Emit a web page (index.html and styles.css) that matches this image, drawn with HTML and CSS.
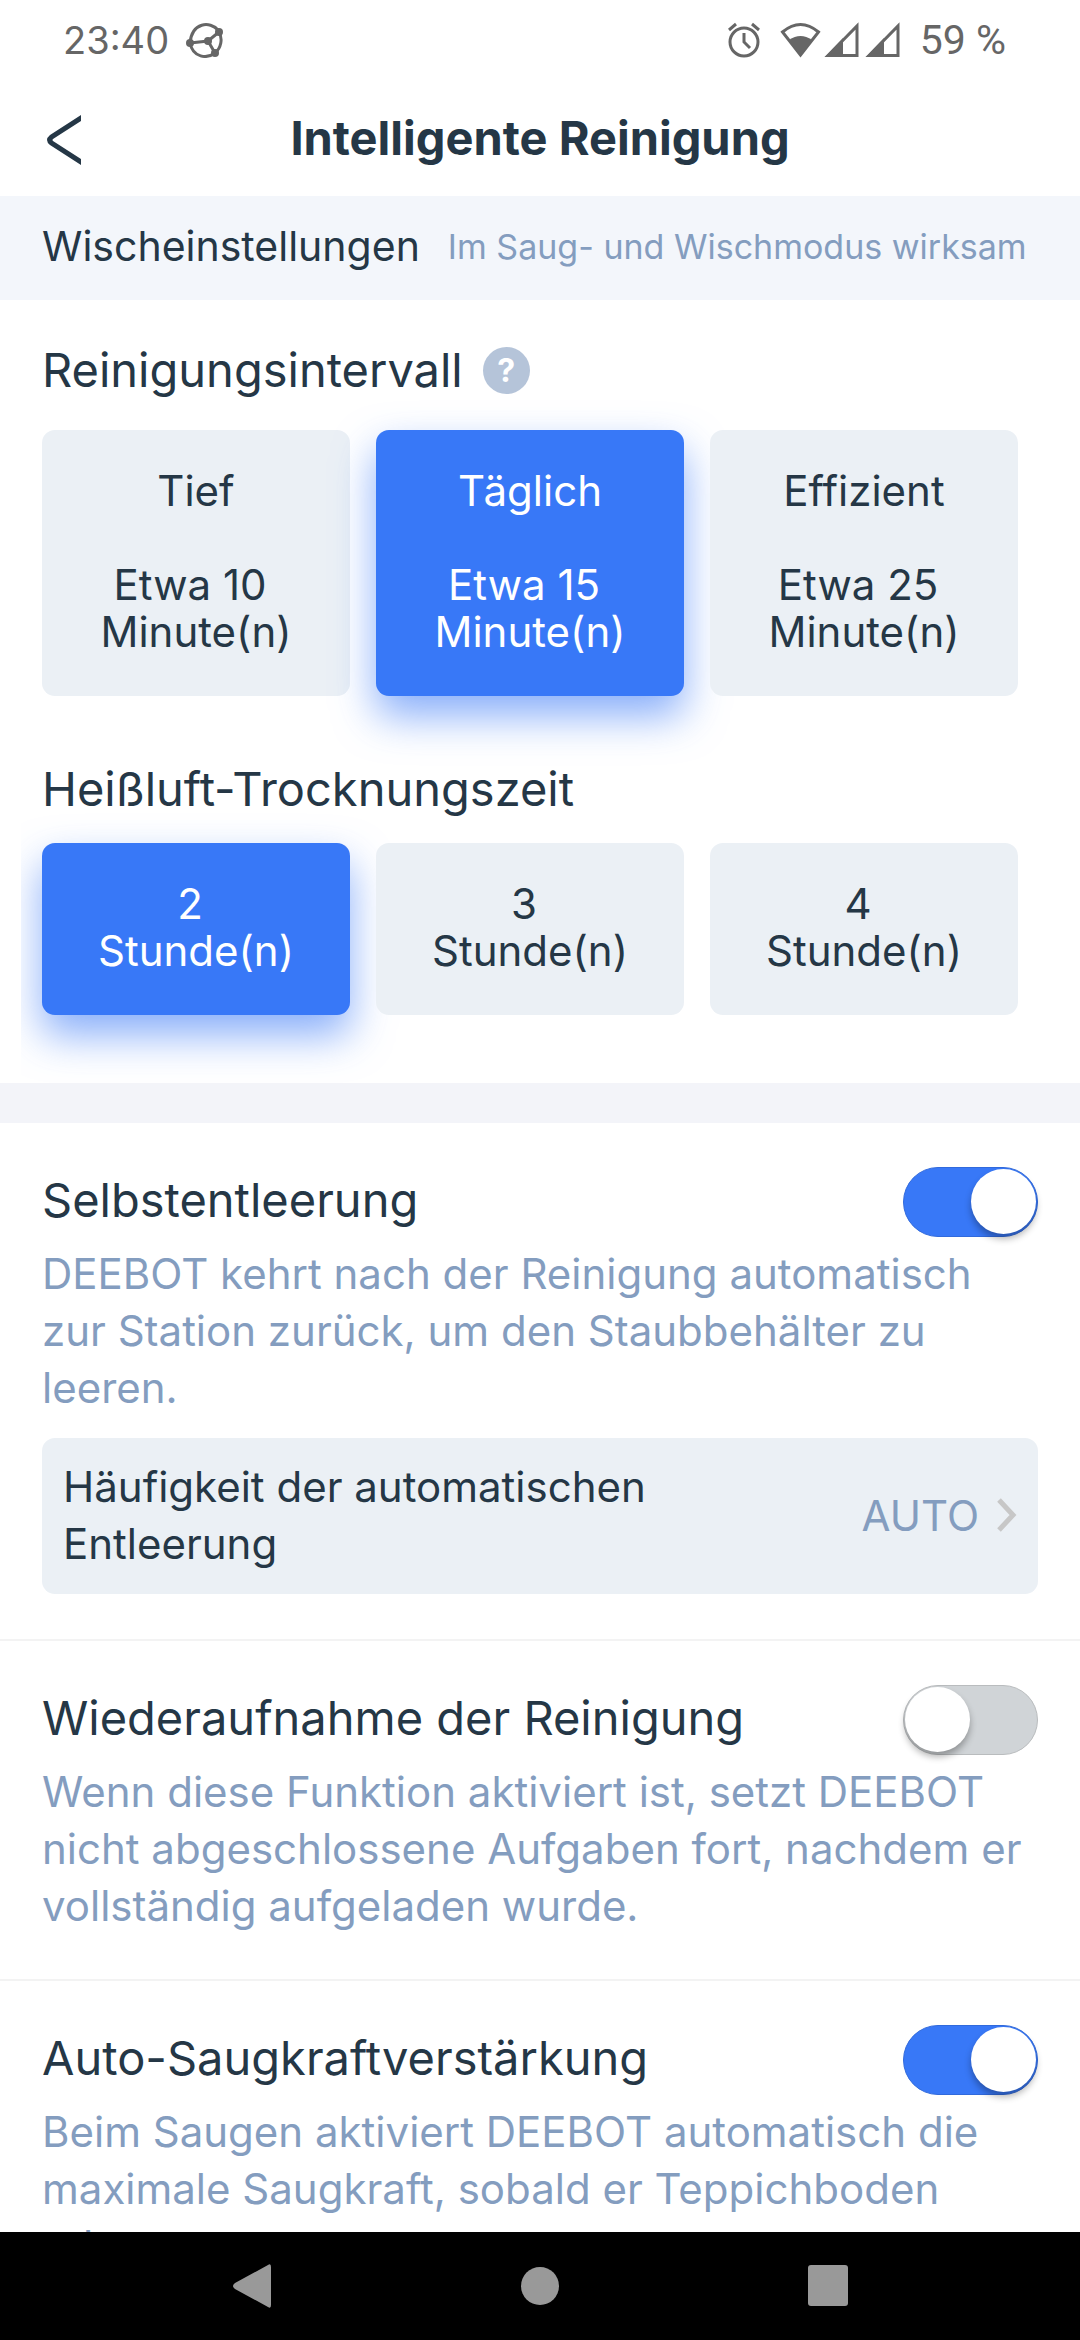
FILE: index.html
```html
<!DOCTYPE html>
<html lang="de">
<head>
    <meta charset="UTF-8">
    <meta name="viewport" content="width=device-width, initial-scale=1.0">
    <title>Intelligente Reinigung</title>
    <link rel="stylesheet" href="styles.css">
</head>
<body>
    <div class="status-bar">
        <span>23:40</span>
        <svg class="status-app" width="38" height="36" viewBox="0 0 38 36" fill="none" stroke="#666" stroke-width="3">
            <path d="M32 8C24 -1 6 0 4 21C7 36 21 37 29 31M4 21L22 19L33 10M22 19L29 31M33 10C37 17 35 26 29 31"/>
            <g fill="#666" stroke="none">
                <circle cx="4" cy="21" r="4"/>
                <circle cx="22" cy="19" r="4"/>
                <circle cx="33" cy="10" r="4"/>
                <circle cx="29" cy="31" r="4"/>
            </g>
        </svg>
        <div class="status-icons">
            <svg width="34" height="36" viewBox="0 0 34 36" fill="none" stroke="#666" stroke-width="3">
                <circle cx="17" cy="20" r="14"/>
                <path d="M17 11V20L23 26M2 8L9 2M25 2L32 8"/>
            </svg>
            <svg class="wifi" width="41" height="36" viewBox="0 0 41 36">
                <path d="M2.500 10Q20.500 -5 38.500 10L20.500 33Z" fill="none" stroke="#666" stroke-width="3"/>
                <path d="M9 18Q20.500 10 32 18L20.500 34Z" fill="#666"/>
            </svg>
            <svg class="signal" width="35" height="36" viewBox="0 0 35 36">
                <path d="M4 33.500L33 4V33.500Z" fill="none" stroke="#666" stroke-width="3"/>
                <path d="M1 35L19 16V35Z" fill="#666"/>
            </svg>
            <svg class="signal" width="35" height="36" viewBox="0 0 35 36">
                <path d="M4 33.500L33 4V33.500Z" fill="none" stroke="#666" stroke-width="3"/>
                <path d="M1 35L19 16V35Z" fill="#666"/>
            </svg>
        </div>
        <span class="battery">59 %</span>
    </div>

    <header class="header">
        <button class="back" aria-label="Zurück">
            <svg width="36" height="50" viewBox="0 0 36 50">
                <path d="M35 0V6L7 24Q6 25 7 26L35 44V50L4 30Q-2 25 4 20Z" fill="#253746"/>
            </svg>
        </button>
        <h1>Intelligente Reinigung</h1>
    </header>

    <main>
        <div class="band">
            <h2>Wischeinstellungen</h2>
            <span>Im Saug- und Wischmodus wirksam</span>
        </div>

        <section class="mop">
            <h3>Reinigungsintervall <button class="help" aria-label="Hilfe">?</button></h3>
            <div class="options">
                <button class="option">Tief<br><br>Etwa 10 Minute(n)</button>
                <button class="option active">Täglich<br><br>Etwa 15 Minute(n)</button>
                <button class="option">Effizient<br><br>Etwa 25 Minute(n)</button>
            </div>
            <h3>Heißluft-Trocknungszeit</h3>
            <div class="options">
                <button class="option active">2 Stunde(n)</button>
                <button class="option">3 Stunde(n)</button>
                <button class="option">4 Stunde(n)</button>
            </div>
        </section>

        <div class="divider"></div>

        <section class="setting">
            <div class="setting-head">
                <label for="auto-empty">Selbstentleerung</label>
                <input type="checkbox" class="switch" id="auto-empty" checked>
            </div>
            <p>DEEBOT kehrt nach der Reinigung automatisch zur Station zurück, um den Staubbehälter zu leeren.</p>
            <button class="row">
                <span class="row-label">Häufigkeit der automatischen Entleerung</span>
                <span class="row-value">AUTO</span>
                <svg width="20" height="34" viewBox="0 0 20 34" fill="none" stroke="#c7c7c7" stroke-width="5">
                    <path d="M2 2L16 17L2 32"/>
                </svg>
            </button>
        </section>

        <section class="setting">
            <div class="setting-head">
                <label for="resume">Wiederaufnahme der Reinigung</label>
                <input type="checkbox" class="switch" id="resume">
            </div>
            <p>Wenn diese Funktion aktiviert ist, setzt DEEBOT nicht abgeschlossene Aufgaben fort, nachdem er vollständig aufgeladen wurde.</p>
        </section>

        <section class="setting">
            <div class="setting-head">
                <label for="boost">Auto-Saugkraftverstärkung</label>
                <input type="checkbox" class="switch" id="boost" checked>
            </div>
            <p>Beim Saugen aktiviert DEEBOT automatisch die maximale Saugkraft, sobald er Teppichboden erkennt.</p>
        </section>
    </main>

    <nav class="nav-bar">
        <button aria-label="Zurück">
            <svg width="40" height="44" viewBox="0 0 40 44" fill="#999"><path d="M36 1Q39 -1 39 3V41Q39 45 36 43L3 25Q-1 22 3 19Z"/></svg>
        </button>
        <button aria-label="Startseite">
            <svg width="40" height="44" viewBox="0 0 40 44" fill="#999"><circle cx="20" cy="22" r="19"/></svg>
        </button>
        <button aria-label="Übersicht">
            <svg width="40" height="44" viewBox="0 0 40 44" fill="#999"><rect y="1" width="40" height="41" rx="3"/></svg>
        </button>
    </nav>
</body>
</html>
```

FILE: styles.css
```css
* {
    box-sizing: border-box;
}
body {
    margin: 0;
    height: 100vh;
    display: flex;
    flex-direction: column;
    background: #fff;
    color: #253746;
    font-family: Inter, sans-serif;
    font-size: 42px;
}
h1, h2, h3, p {
    margin: 0;
    font-weight: 400;
}
button {
    padding: 0;
    border: none;
    background: none;
    color: inherit;
    font: inherit;
    cursor: pointer;
}
svg {
    display: block;
    flex: none;
}

/* system status bar */
.status-bar {
    display: flex;
    align-items: center;
    height: 80px;
    padding: 0 74px 0 63px;
    color: #666;
    font-size: 38px;
}
.status-app {
    margin-left: 17px;
}
.status-icons {
    display: flex;
    margin-left: auto;
    margin-right: 20px;
}
.wifi {
    margin: 0 3px 0 19px;
}
.signal + .signal {
    margin-left: 6px;
}
.battery {
    font-family: Roboto, sans-serif;
    font-size: 41px;
}

.header {
    display: flex;
    align-items: center;
    justify-content: center;
    height: 116px;
    padding-bottom: 2px;
    position: relative;
}
.header h1 {
    font-size: 47px;
    font-weight: 700;
}
.back {
    position: absolute;
    top: 35px;
    left: 46px;
}

main {
    flex: 1;
    min-height: 0;
    overflow: hidden;
}
.band {
    display: flex;
    align-items: center;
    gap: 28px;
    height: 104px;
    padding: 0 42px 4px;
    background: #f3f6fb;
}
.band h2 {
    font-size: 41px;
}
.band span {
    color: #849dbf;
    font-size: 34px;
}

.mop {
    margin: 0 21px;
    padding: 35px 41px 68px 21px;
    overflow: hidden;
}
.mop h3 {
    display: flex;
    align-items: center;
    gap: 20px;
    font-size: 47px;
    line-height: 70px;
}
.help {
    width: 47px;
    height: 47px;
    border-radius: 50%;
    background: #b5c4d9;
    color: #fff;
    font-size: 32px;
    font-weight: 700;
    line-height: 47px;
}
.options {
    display: grid;
    grid-template-columns: repeat(3, 1fr);
    gap: 26px;
    margin-top: 25px;
}
.options + h3 {
    margin-top: 58px;
}
.options + h3 + .options {
    margin-top: 19px;
}
.option {
    padding: 37px 42px 41px;
    border-radius: 13px;
    background: #ebf0f5;
    line-height: 47px;
    white-space: break-spaces;
}
.option.active {
    background: #3878f7;
    color: #fff;
    box-shadow: 0 20px 42px rgba(56, 120, 247, 0.6);
}

.divider {
    height: 40px;
    background: #f3f4f9;
}

.setting {
    padding: 44px 42px 45px;
    border-bottom: 2px solid #f3f3f3;
}
.setting-head {
    display: flex;
    align-items: center;
    justify-content: space-between;
}
.setting-head label {
    font-size: 47px;
    line-height: 66px;
    padding-bottom: 4px;
}
.setting p {
    margin-top: 8px;
    color: #849dbf;
    line-height: 57px;
}
.switch {
    appearance: none;
    width: 135px;
    height: 70px;
    margin: 0;
    padding: 1px;
    border: 1px solid #b9bcbe;
    border-radius: 35px;
    background: #d0d4d7;
    display: flex;
    cursor: pointer;
}
.switch::before {
    content: "";
    width: 65px;
    height: 65px;
    border-radius: 50%;
    background: #fff;
    box-shadow: 0 5px 7px rgba(0, 0, 0, 0.3);
}
.switch:checked {
    justify-content: flex-end;
    border-color: #316adc;
    background: #3878f7;
}

.row {
    display: flex;
    align-items: center;
    width: 100%;
    margin-top: 22px;
    padding: 20px 21px 22px;
    border-radius: 13px;
    background: #ebf0f5;
    line-height: 57px;
    text-align: left;
}
.row-label {
    flex: 1;
    padding-right: 200px;
}
.row-value {
    margin-right: 18px;
    color: #849dbf;
}

/* system navigation */
.nav-bar {
    display: flex;
    justify-content: center;
    align-items: center;
    gap: 248px;
    height: 108px;
    background: #000;
}
```
